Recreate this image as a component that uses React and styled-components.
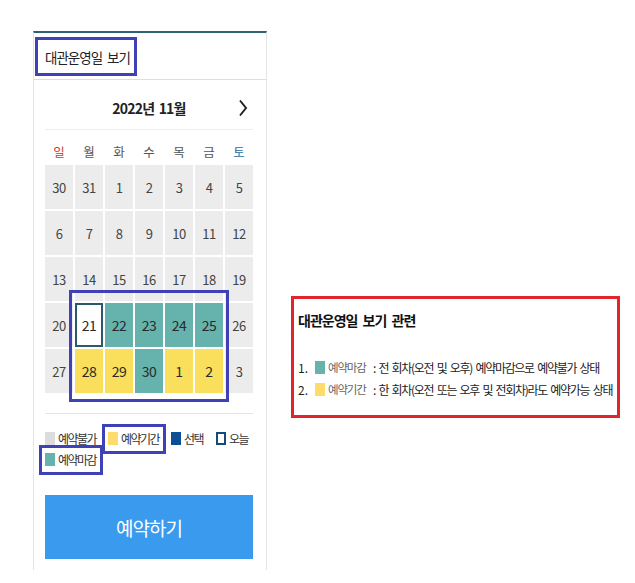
import React from "react";
import styled, { createGlobalStyle } from "styled-components";

const GlobalStyle = createGlobalStyle`
  body {
    margin: 0;
    background: #fff;
    font-family: "Noto Sans CJK KR", "Noto Sans", sans-serif;
    color: #333;
  }
`;

const weekdays = ["일", "월", "화", "수", "목", "금", "토"];

// g: 예약불가(회색), c: 예약마감, y: 예약기간, t: 오늘
const weeks = [
  [[30, "g"], [31, "g"], [1, "g"], [2, "g"], [3, "g"], [4, "g"], [5, "g"]],
  [[6, "g"], [7, "g"], [8, "g"], [9, "g"], [10, "g"], [11, "g"], [12, "g"]],
  [[13, "g"], [14, "g"], [15, "g"], [16, "g"], [17, "g"], [18, "g"], [19, "g"]],
  [[20, "g"], [21, "t"], [22, "c"], [23, "c"], [24, "c"], [25, "c"], [26, "g"]],
  [[27, "g"], [28, "y"], [29, "y"], [30, "c"], [1, "y"], [2, "y"], [3, "g"]],
];

const cellColors = {
  g: "#ececec",
  c: "#66b3ae",
  y: "#f9df5b",
  t: "#ffffff",
};

const App = () => {
  return (
    <>
      <GlobalStyle />
      <Page>
        <Panel>
          <Header>
            <TitleMark>대관운영일 보기</TitleMark>
          </Header>
          <Body>
            <MonthBar>
              <span />
              <MonthTitle>2022년 11월</MonthTitle>
              <NextButton aria-label="다음 달">
                <svg width="10" height="18" viewBox="0 0 10 18">
                  <path d="M2 1.5 L8 9 L2 16.5" fill="none" stroke="#222" strokeWidth="2" />
                </svg>
              </NextButton>
            </MonthBar>
            <Weekdays>
              {weekdays.map((d, i) => (
                <Weekday key={d} day={i}>{d}</Weekday>
              ))}
            </Weekdays>
            <Grid>
              {weeks.flat().map(([n, kind], i) => (
                <Cell key={i} kind={kind}>{n}</Cell>
              ))}
              <GridMark />
            </Grid>
            <Legend>
              <LegendRow>
                <LegendItem w={63}><Swatch color="#dcdcdc" />예약불가</LegendItem>
                <LegendItem w={63} marked><Swatch color="#fddc6b" />예약기간</LegendItem>
                <LegendItem w={45}><Swatch color="#0d4f94" />선택</LegendItem>
                <LegendItem><Swatch color="#fff" outline />오늘</LegendItem>
              </LegendRow>
              <LegendRow>
                <LegendItem w={63} marked><Swatch color="#66b3ae" />예약마감</LegendItem>
              </LegendRow>
            </Legend>
            <ReserveButton>예약하기</ReserveButton>
          </Body>
        </Panel>

        <NoteBox>
          <NoteTitle>대관운영일 보기 관련</NoteTitle>
          <NoteList>
            <NoteRow>
              <NoteNum>1.</NoteNum>
              <Swatch color="#66b3ae" />
              <NoteLabel>예약마감</NoteLabel>
              <NoteText>: 전 회차(오전 및 오후) 예약마감으로 예약불가 상태</NoteText>
            </NoteRow>
            <NoteRow>
              <NoteNum>2.</NoteNum>
              <Swatch color="#fddc6b" />
              <NoteLabel>예약기간</NoteLabel>
              <NoteText>: 한 회차(오전 또는 오후 및 전회차)라도 예약가능 상태</NoteText>
            </NoteRow>
          </NoteList>
        </NoteBox>
      </Page>
    </>
  );
};

const Page = styled.div`
  display: flex;
  align-items: flex-start;
  padding: 31px 0 0 33px;
`;

const Panel = styled.div`
  width: 234px;
  box-sizing: border-box;
  border-top: 2px solid #2d6176;
  border-left: 1px solid #e4e4e4;
  border-right: 1px solid #e4e4e4;
  padding-bottom: 11px;
`;

const Header = styled.div`
  height: 47px;
  box-sizing: border-box;
  border-bottom: 1px solid #ddd;
  padding: 4px 0 0 1px;
`;

const TitleMark = styled.span`
  display: inline-flex;
  align-items: center;
  height: 39px;
  box-sizing: border-box;
  border: 3px solid #4141b6;
  padding: 0 4px 0 7px;
  font-size: 13.5px;
  letter-spacing: -1px;
  word-spacing: 3px;
  color: #222;
`;

const Body = styled.div`
  padding: 0 13px 0 11px;
`;

const MonthBar = styled.div`
  display: grid;
  grid-template-columns: 1fr auto 1fr;
  align-items: center;
  height: 50px;
  padding-top: 7px;
  box-sizing: border-box;
  border-bottom: 1px solid #eee;
`;

const MonthTitle = styled.div`
  font-size: 14px;
  font-weight: 700;
  letter-spacing: -0.8px;
  word-spacing: 2px;
  color: #222;
`;

const NextButton = styled.div`
  justify-self: end;
  margin-right: 5px;
  display: flex;
`;

const Weekdays = styled.div`
  display: grid;
  grid-template-columns: repeat(7, 28px);
  column-gap: 2px;
  height: 35px;
  padding-top: 12px;
  box-sizing: border-box;
`;

const Weekday = styled.div`
  text-align: center;
  line-height: 20px;
  font-size: 12.5px;
  color: ${(p) => (p.day === 0 ? "#c83a35" : p.day === 6 ? "#2b6a9c" : "#555")};
`;

const Grid = styled.div`
  position: relative;
  display: grid;
  grid-template-columns: repeat(7, 28px);
  grid-auto-rows: 44px;
  gap: 2px;
`;

const Cell = styled.div`
  display: flex;
  align-items: center;
  justify-content: center;
  box-sizing: border-box;
  background: ${(p) => cellColors[p.kind]};
  border: ${(p) => (p.kind === "t" ? "2px solid #285a6c" : "none")};
  font-size: ${(p) => (p.kind === "g" ? "13px" : "14px")};
  color: ${(p) => (p.kind === "g" ? "#444" : "#2a2a2a")};
  letter-spacing: -0.5px;
`;

const GridMark = styled.div`
  position: absolute;
  left: 24px;
  top: 125px;
  width: 160px;
  height: 112px;
  box-sizing: border-box;
  border: 3px solid #4141b6;
  pointer-events: none;
`;

const Legend = styled.div`
  margin-top: 20px;
  border-top: 1px solid #e5e5e5;
  padding-top: 14px;
`;

const LegendRow = styled.div`
  display: flex;
  align-items: center;
  height: 21px;
`;

const LegendItem = styled.div`
  display: flex;
  align-items: center;
  width: ${(p) => (p.w ? `${p.w}px` : "auto")};
  font-size: 12px;
  letter-spacing: -1.5px;
  color: #333;
  white-space: nowrap;
  ${(p) =>
    p.marked &&
    `
    position: relative;
    &::after {
      content: "";
      position: absolute;
      left: -6px;
      right: ${p.w ? p.w - 58 : 0}px;
      top: -6px;
      bottom: -7px;
      border: 3px solid #4141b6;
    }
  `}
`;

const Swatch = styled.i`
  display: inline-block;
  flex: none;
  width: 10px;
  height: 13px;
  box-sizing: border-box;
  background: ${(p) => p.color};
  border: ${(p) => (p.outline ? "2px solid #164a78" : "none")};
  margin-right: 3px;
`;

const ReserveButton = styled.div`
  margin-top: 25px;
  height: 64px;
  display: flex;
  align-items: center;
  justify-content: center;
  background: #3a9bee;
  color: #fff;
  font-size: 19px;
  letter-spacing: -1px;
`;

const NoteBox = styled.div`
  margin: 265px 0 0 24px;
  width: 329px;
  box-sizing: border-box;
  border: 3px solid #e2252d;
  padding: 11px 4px 15px 4px;
`;

const NoteTitle = styled.div`
  font-size: 14px;
  font-weight: 700;
  line-height: 20px;
  letter-spacing: -1px;
  word-spacing: 3px;
  color: #111;
`;

const NoteList = styled.div`
  margin-top: 26px;
`;

const NoteRow = styled.div`
  display: flex;
  align-items: center;
  height: 22px;
  white-space: nowrap;
`;

const NoteNum = styled.span`
  width: 17px;
  font-size: 12px;
  color: #222;
`;

const NoteLabel = styled.span`
  width: 45px;
  font-size: 11.5px;
  letter-spacing: -1.2px;
  color: #666;
`;

const NoteText = styled.span`
  font-size: 12px;
  letter-spacing: -1.3px;
  word-spacing: 2px;
  color: #222;
`;

export default App;
